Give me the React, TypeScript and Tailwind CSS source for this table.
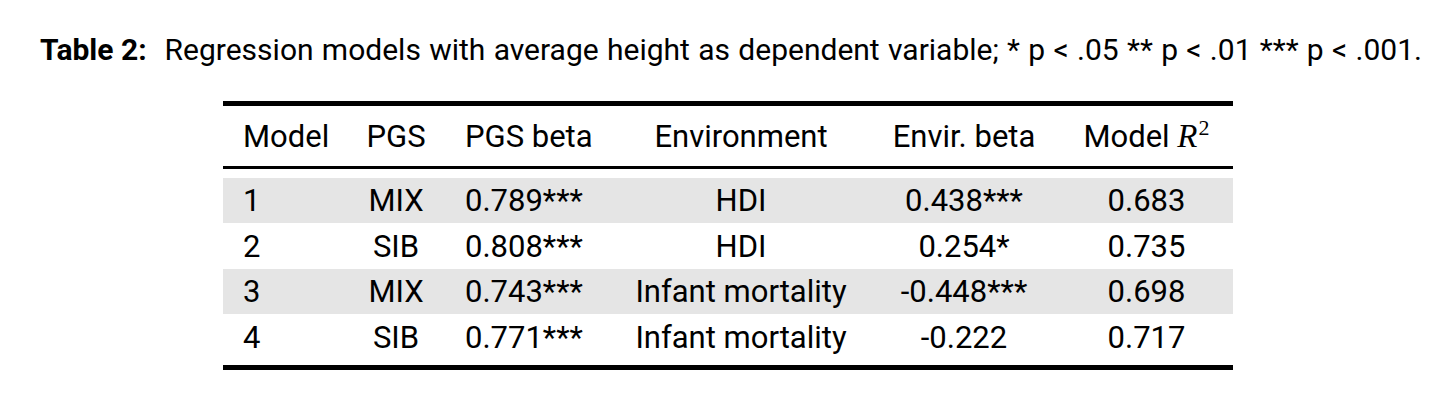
const cols = "grid grid-cols-[124px_98px_169px_254px_192px_173px]";

const rows = [
  { m: "1", pgs: "MIX", pb: "0.789***", env: "HDI", eb: "0.438***", r2: "0.683", shade: true, h: "h-[45px]" },
  { m: "2", pgs: "SIB", pb: "0.808***", env: "HDI", eb: "0.254*", r2: "0.735", shade: false, h: "h-[46px]" },
  { m: "3", pgs: "MIX", pb: "0.743***", env: "Infant mortality", eb: "-0.448***", r2: "0.698", shade: true, h: "h-[45px]" },
  { m: "4", pgs: "SIB", pb: "0.771***", env: "Infant mortality", eb: "-0.222", r2: "0.717", shade: false, h: "h-[46px]" },
];

function Cell({ children, center }: { children: React.ReactNode; center?: boolean }) {
  return (
    <div className={`flex items-center px-[20px] whitespace-nowrap ${center ? "justify-center" : "justify-start"}`}>
      {children}
    </div>
  );
}

export default function App() {
  return (
    <div className="w-[1456px] h-[409px] bg-white text-black font-[Roboto,sans-serif] flex flex-col items-center pt-[35px]">
      <div className="self-start ml-[40px] w-[1382px] flex text-[30px] leading-[30px]">
        <span className="font-bold whitespace-nowrap">Table 2:</span>
        <span className="flex-1 ml-[18px] whitespace-nowrap text-justify [text-align-last:justify]">
          Regression models with average height as dependent variable; * p &lt; .05 ** p &lt; .01 *** p &lt; .001.
        </span>
      </div>

      <div className="w-[1010px] mt-[36px] text-[31px] leading-[31px]">
        <div className="h-[5px] bg-black" />
        <div className={`${cols} h-[60px]`}>
          <Cell>Model</Cell>
          <Cell center>PGS</Cell>
          <Cell>PGS beta</Cell>
          <Cell center>Environment</Cell>
          <Cell center>Envir. beta</Cell>
          <Cell center>
            Model&nbsp;
            <span className="font-['Liberation_Serif',serif] italic text-[33px]">R</span>
            <span className="font-['Liberation_Serif',serif] text-[22px] leading-none -mt-[17px] ml-[1px]">2</span>
          </Cell>
        </div>
        <div className="h-[3px] bg-black" />
        <div className="h-[9px]" />
        {rows.map((r) => (
          <div key={r.m} className={`${cols} ${r.h} ${r.shade ? "bg-[#e5e5e5]" : ""}`}>
            <Cell>{r.m}</Cell>
            <Cell center>{r.pgs}</Cell>
            <Cell>{r.pb}</Cell>
            <Cell center>{r.env}</Cell>
            <Cell center>{r.eb}</Cell>
            <Cell center>{r.r2}</Cell>
          </div>
        ))}
        <div className="h-[5px]" />
        <div className="h-[5px] bg-black" />
      </div>
    </div>
  );
}
